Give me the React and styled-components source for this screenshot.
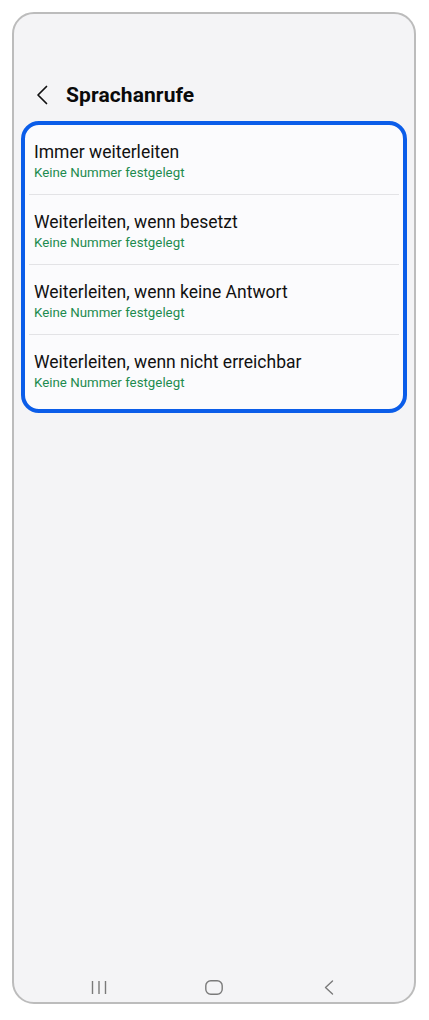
import React from "react";
import styled, { createGlobalStyle } from "styled-components";

const Global = createGlobalStyle`
  html, body {
    margin: 0;
    padding: 0;
    background: #ffffff;
  }
  body {
    font-family: Roboto, "Noto Sans", "Liberation Sans", sans-serif;
    -webkit-font-smoothing: antialiased;
  }
`;

const Frame = styled.div`
  box-sizing: border-box;
  margin: 12px;
  width: 404px;
  height: 992px;
  border: 2px solid #bcbcbc;
  border-radius: 22px;
  background: #f4f4f6;
  display: flex;
  flex-direction: column;
  padding: 55px 7px 0 7px;
  overflow: hidden;
`;

const Header = styled.header`
  height: 52px;
  display: flex;
  align-items: center;
  gap: 18px;
  padding-left: 15px;
`;

const BackButton = styled.button`
  border: 0;
  background: none;
  padding: 0;
  width: 12px;
  height: 20px;
  display: flex;
  align-items: center;
  justify-content: center;
  color: #111;
`;

const Title = styled.h1`
  margin: 0;
  font-size: 21px;
  font-weight: 700;
  color: #0a0a0a;
  letter-spacing: 0.1px;
`;

const Card = styled.section`
  border: 4px solid #0b5de9;
  border-radius: 18px;
  background: #fbfbfd;
  overflow: hidden;
`;

const Row = styled.div`
  height: ${(p) => (p.$last ? 74 : 70)}px;
  box-sizing: border-box;
  padding: 16px 8px 0 5px;
  margin: 0 4px;
  border-bottom: ${(p) => (p.$last ? "none" : "1px solid #e3e3e6")};
  display: flex;
  flex-direction: column;
`;

const RowTitle = styled.div`
  font-size: 17.5px;
  line-height: 22px;
  color: #111;
`;

const RowSub = styled.div`
  margin-top: 1px;
  font-size: 13.3px;
  line-height: 18px;
  color: #1d8b4f;
`;

const NavBar = styled.nav`
  margin-top: auto;
  height: 22px;
  display: flex;
  justify-content: center;
  align-items: flex-start;
`;

const NavCell = styled.div`
  width: 115px;
  display: flex;
  justify-content: center;
  color: #7a7a7a;
`;

const rows = [
  "Immer weiterleiten",
  "Weiterleiten, wenn besetzt",
  "Weiterleiten, wenn keine Antwort",
  "Weiterleiten, wenn nicht erreichbar",
];

export default function App() {
  return (
    <>
      <Global />
      <Frame>
        <Header>
          <BackButton aria-label="Zurück">
            <svg width="12" height="20" viewBox="0 0 12 20" fill="none">
              <path d="M10.5 1.5 L2 10 L10.5 18.5" stroke="currentColor" strokeWidth="1.7" strokeLinecap="round" strokeLinejoin="round" />
            </svg>
          </BackButton>
          <Title>Sprachanrufe</Title>
        </Header>
        <Card>
          {rows.map((t, i) => (
            <Row key={t} $last={i === rows.length - 1}>
              <RowTitle>{t}</RowTitle>
              <RowSub>Keine Nummer festgelegt</RowSub>
            </Row>
          ))}
        </Card>
        <NavBar>
          <NavCell>
            <svg width="16" height="15" viewBox="0 0 16 15" fill="none">
              <path d="M1.5 1v13M8 1v13M14.5 1v13" stroke="currentColor" strokeWidth="1.4" />
            </svg>
          </NavCell>
          <NavCell>
            <svg width="18" height="15" viewBox="0 0 18 15" fill="none">
              <rect x="0.8" y="0.8" width="16.4" height="13.4" rx="5" stroke="currentColor" strokeWidth="1.4" />
            </svg>
          </NavCell>
          <NavCell>
            <svg width="10" height="15" viewBox="0 0 10 15" fill="none">
              <path d="M8.5 1 L1.5 7.5 L8.5 14" stroke="currentColor" strokeWidth="1.4" strokeLinecap="round" strokeLinejoin="round" />
            </svg>
          </NavCell>
        </NavBar>
      </Frame>
    </>
  );
}
